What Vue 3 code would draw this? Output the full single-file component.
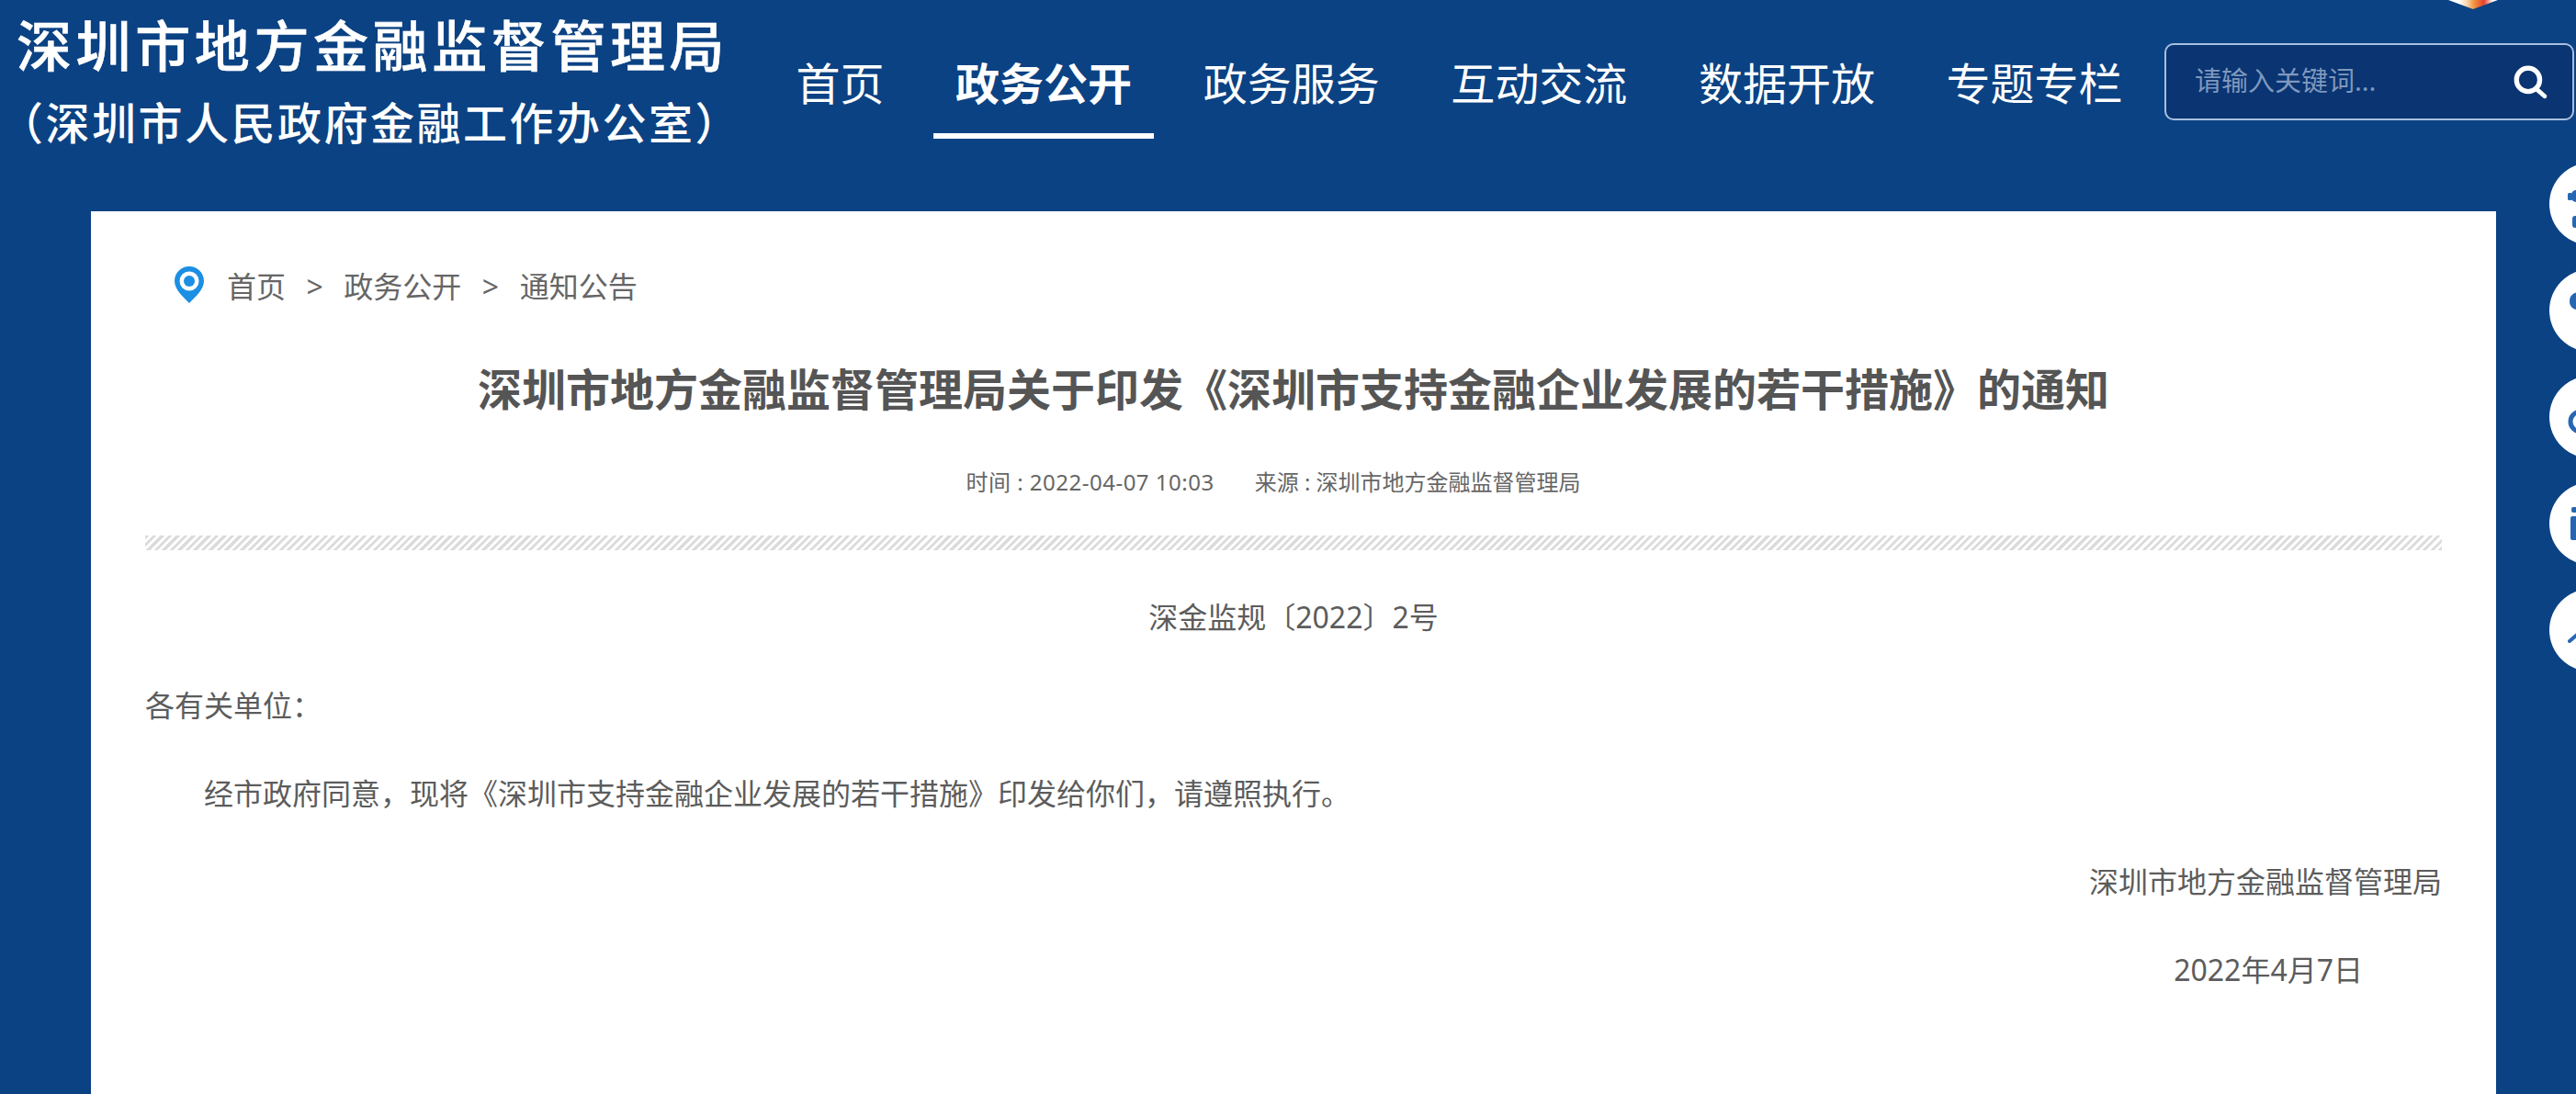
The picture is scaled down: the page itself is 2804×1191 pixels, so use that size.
<script setup>
const nav = [
  { label: '首页' },
  { label: '政务公开', active: true },
  { label: '政务服务' },
  { label: '互动交流' },
  { label: '数据开放' },
  { label: '专题专栏' }
]
const side = [177, 293, 409, 525, 641]
</script>

<template>
  <div class="page">
    <header class="header">
      <div class="brand">
        <div class="brand-name">深圳市地方金融监督管理局</div>
        <div class="brand-sub">（深圳市人民政府金融工作办公室）</div>
      </div>
      <nav class="nav">
        <a v-for="item in nav" :key="item.label" class="nav-item" :class="{ active: item.active }">{{ item.label }}</a>
      </nav>
      <div class="search">
        <span class="placeholder">请输入关键词...</span>
        <svg class="search-icon" viewBox="0 0 36 36" fill="none" stroke="#fff">
          <circle cx="16" cy="16" r="12" stroke-width="5" />
          <path d="M24 25l9 8" stroke-width="4.5" stroke-linecap="round" />
        </svg>
      </div>
    </header>

    <main class="card">
      <div class="crumbs">
        <svg class="pin" viewBox="0 0 32 40">
          <path d="M16 0C7 0 0 7 0 16c0 9 9 17 16 24 7-7 16-15 16-24C32 7 25 0 16 0z" fill="#1b8fe3" />
          <circle cx="16" cy="16" r="10.5" fill="#fff" />
          <circle cx="16" cy="16" r="6" fill="#1b8fe3" />
        </svg>
        <span>首页</span><i>&gt;</i><span>政务公开</span><i>&gt;</i><span>通知公告</span>
      </div>
      <h1 class="title">深圳市地方金融监督管理局关于印发《深圳市支持金融企业发展的若干措施》的通知</h1>
      <div class="meta">
        <span class="meta-time">时间 : 2022-04-07 10:03</span>
        <span>来源 : 深圳市地方金融监督管理局</span>
      </div>
      <div class="stripe"></div>
      <article class="body">
        <p class="center">深金监规〔2022〕2号</p>
        <p>各有关单位：</p>
        <p class="indent">经市政府同意，现将《深圳市支持金融企业发展的若干措施》印发给你们，请遵照执行。</p>
        <p class="right">深圳市地方金融监督管理局</p>
        <p class="right date">2022年4月7日</p>
      </article>
    </main>

    <div class="emblem"></div>
    <div v-for="(top, i) in side" :key="top" class="float" :style="{ top: top + 'px' }">
      <svg class="float-icon" viewBox="0 0 90 90" fill="#2767b2" stroke="#2767b2">
        <g v-if="i === 0" stroke="none">
          <rect x="20" y="33" width="5" height="8" rx="1.5" />
          <rect x="24" y="30" width="18" height="13" rx="5" />
          <rect x="25" y="58" width="18" height="13" rx="3" />
        </g>
        <path v-else-if="i === 1" stroke="none" d="M34 25c-8 0-12 4-12 10 0 5 3 8 7 9l2 6 4-6c5-1 9-4 9-9 0-6-4-10-10-10z" />
        <circle v-else-if="i === 2" cx="34" cy="50" r="11" fill="none" stroke-width="5" />
        <g v-else-if="i === 3" stroke="none">
          <rect x="24" y="27" width="18" height="6" rx="2" />
          <rect x="23" y="37" width="20" height="26" rx="2" />
        </g>
        <path v-else d="M22 57l23-20" fill="none" stroke-width="4" stroke-linecap="round" />
      </svg>
    </div>
  </div>
</template>

<style>
html, body { margin: 0; padding: 0; background: #0b4283; overflow: hidden; }
</style>

<style scoped>
.page {
  position: relative;
  width: 2804px;
  height: 1191px;
  overflow: hidden;
  background: #0b4283;
  font-family: "Noto Sans", "Noto Sans CJK SC", sans-serif;
  color: #666;
}
.header {
  display: flex;
  align-items: flex-start;
  height: 230px;
  box-sizing: border-box;
  color: #fff;
}
.brand { width: 842.5px; flex: none; padding: 14px 0 0 18px; box-sizing: border-box; }
.brand-name { font-size: 60px; line-height: 72px; letter-spacing: 4.6px; font-weight: 500; -webkit-text-stroke: 0.6px #fff; white-space: nowrap; }
.brand-sub { font-size: 48px; line-height: 60px; letter-spacing: 2.5px; font-weight: 500; margin: 18px 0 0 -19px; white-space: nowrap; }
.nav { display: flex; gap: 29.6px; width: 1513.5px; flex: none; padding-top: 59px; box-sizing: border-box; }
.nav-item {
  box-sizing: border-box;
  height: 92px;
  padding: 0 24px;
  font-size: 48px;
  line-height: 64px;
  white-space: nowrap;
}
.nav-item.active { font-weight: 700; border-bottom: 6px solid #fff; }
.search {
  display: flex;
  align-items: center;
  justify-content: space-between;
  box-sizing: border-box;
  width: 446px;
  height: 84px;
  margin-top: 47px;
  padding: 0 26px 0 31px;
  border: 2px solid #a9bfdf;
  border-radius: 10px;
  background: #0a3472;
}
.placeholder { font-size: 29px; color: #7f98bd; position: relative; top: -3px; }
.search-icon { width: 40px; height: 38px; }
.card {
  box-sizing: border-box;
  width: 2618px;
  height: 961px;
  margin-left: 99px;
  padding: 0 59px;
  background: #fff;
}
.crumbs {
  display: flex;
  align-items: center;
  height: 40px;
  padding-top: 62px;
  padding-left: 32px;
  font-size: 32px;
  line-height: 44px;
  color: #666;
}
.crumbs i { font-style: normal; font-size: 32px; margin: 0 22.5px; }
.pin { width: 32px; height: 40px; margin: -4px 25px 0 0; }
.title {
  margin: 58px 0 0;
  font-size: 48px;
  line-height: 68px;
  font-weight: 700;
  text-align: center;
  color: #555;
  white-space: nowrap;
}
.meta {
  display: flex;
  justify-content: center;
  gap: 44px;
  margin-top: 49px;
  padding-right: 44px;
  font-size: 24px;
  line-height: 36px;
  color: #666;
}
.meta-time { letter-spacing: 0.5px; }
.stripe {
  height: 16px;
  margin-top: 40px;
  background: repeating-linear-gradient(135deg, #dcdcdc 0 3px, #fff 3px 6px);
}
.body { font-size: 32px; line-height: 64px; color: #5c5c5c; padding-top: 41px; }
.body p { margin: 0 0 32px; }
.center { text-align: center; }
.indent { text-indent: 64px; }
.right { text-align: right; }
.date { padding-right: 86px; }
.emblem {
  position: absolute;
  top: 0;
  left: 2665px;
  width: 54px;
  height: 10px;
  background: linear-gradient(90deg, #fff 0 22%, #f8d3a8 38%, #f0923f 52%, #e8402c 72%, #fff 90%);
  clip-path: polygon(0 0, 100% 0, 50% 100%);
}
.float {
  position: absolute;
  left: 2775px;
  width: 90px;
  height: 90px;
  border-radius: 50%;
  background: #fff;
}
.float-icon { display: block; width: 90px; height: 90px; filter: blur(0.7px); }
</style>
